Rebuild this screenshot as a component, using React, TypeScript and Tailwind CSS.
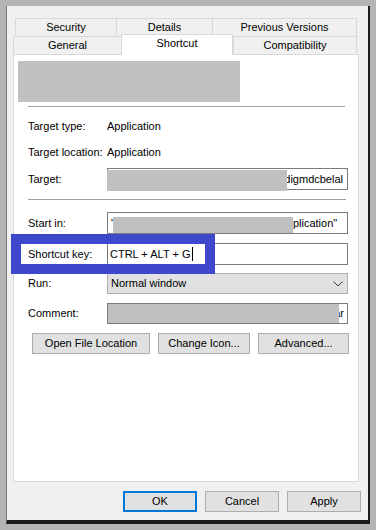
import React from "react";

const font = "font-['Segoe_UI','Liberation_Sans',Arial,sans-serif] text-[11px] text-black";

function Tab({ label, w, active = false }: { label: string; w: string; active?: boolean }) {
  return (
    <div
      className={`${w} flex items-center justify-center border-l border-t border-[#d9d9d9] ${
        active ? "relative z-10 -mb-px h-[21px] border-r bg-white pb-[3px]" : "h-[18px] bg-[#f0f0f0]"
      }`}
    >
      {label}
    </div>
  );
}

function Label({ children }: { children: React.ReactNode }) {
  return <div className="w-[79px] shrink-0">{children}</div>;
}

function Btn({ label, w, primary = false }: { label: string; w: string; primary?: boolean }) {
  return (
    <div
      className={`${w} flex h-[21px] items-center justify-center bg-[#e1e1e1] ${
        primary ? "border-2 border-[#0078d7]" : "border border-[#adadad]"
      }`}
    >
      {label}
    </div>
  );
}

export default function App() {
  return (
    <div className={`h-[530px] w-[376px] bg-[#b4b4b4] pl-[6px] pt-[6px] ${font}`}>
      <div className="h-[518px] w-[364px] border-b-4 border-l border-r-2 border-[#1e1a17] border-l-[#7a7a7a] bg-[#f0f0f0] pt-[12px]">
        {/* tabs */}
        <div className="ml-[8px] flex h-[18px] w-[342px]">
          <Tab label="Security" w="w-[101px]" />
          <Tab label="Details" w="w-[96px]" />
          <div className="flex h-[18px] w-[145px] items-center justify-center border-l border-r border-t border-[#d9d9d9]">
            Previous Versions
          </div>
        </div>
        <div className="ml-[6px] flex h-[18px] w-[344px] items-end">
          <Tab label="General" w="w-[108px]" />
          <Tab label="Shortcut" w="w-[112px]" active />
          <div className="flex h-[18px] w-[124px] items-center justify-center border-l border-r border-t border-[#d9d9d9]">
            Compatibility
          </div>
        </div>

        {/* panel */}
        <div className="ml-[6px] h-[428px] w-[346px] border border-[#d9d9d9] bg-white">
          <div className="ml-[4px] mt-[6px] h-[41px] w-[222px] bg-[#c0c0c0]" />
          <div className="ml-[14px] mt-[4px] h-px w-[317px] bg-[#a0a0a0]" />

          <div className="ml-[14px] mt-[8px] flex h-[22px] items-center">
            <Label>Target type:</Label>
            <span>Application</span>
          </div>
          <div className="ml-[14px] mt-[4px] flex h-[22px] items-center">
            <Label>Target location:</Label>
            <span>Application</span>
          </div>
          <div className="ml-[14px] mt-[5px] flex h-[22px] items-center">
            <Label>Target:</Label>
            <div className="relative flex h-[22px] w-[241px] items-center justify-end border border-[#7a7a7a] pr-[4px]">
              <span>:digmdcbelal</span>
              <div className="absolute -left-px top-[1px] h-[21px] w-[180px] bg-[#c0c0c0]" />
            </div>
          </div>

          <div className="ml-[14px] mt-[9px] h-px w-[318px] bg-[#a0a0a0]" />

          <div className="ml-[14px] mt-[12px] flex h-[22px] items-center">
            <Label>Start in:</Label>
            <div className="flex h-[22px] w-[241px] items-center border border-[#7a7a7a] pl-[3px]">
              <span>"</span>
              <div className="-ml-[2px] h-[16px] w-[180px] self-end bg-[#c0c0c0]" />
              <span>plication"</span>
            </div>
          </div>

          <div className="relative ml-[14px] mt-[9px] flex h-[22px] items-center">
            <Label>Shortcut key:</Label>
            <div className="flex h-[22px] w-[241px] items-center border border-[#7a7a7a] pl-[2px]">
              <span>CTRL + ALT + G</span>
              <span className="ml-px inline-block h-[14px] w-px bg-black" />
            </div>
            <div className="absolute -left-[17px] -top-[9px] z-20 h-[40px] w-[204px] border-[10px] border-[#3f48cc]" />
          </div>

          <div className="ml-[14px] mt-[8px] flex h-[21px] items-center">
            <Label>Run:</Label>
            <div className="flex h-[21px] w-[241px] items-center justify-between border border-[#adadad] bg-[#e1e1e1] pl-[3px] pr-[4px]">
              <span>Normal window</span>
              <svg width="10" height="6" viewBox="0 0 10 6">
                <polyline points="0.5,0.5 5,5 9.5,0.5" fill="none" stroke="#404040" strokeWidth="1" />
              </svg>
            </div>
          </div>

          <div className="ml-[14px] mt-[9px] flex h-[21px] items-center">
            <Label>Comment:</Label>
            <div className="relative flex h-[21px] w-[241px] items-center justify-end border border-[#7a7a7a] pr-[3px]">
              <span>ar</span>
              <div className="absolute left-0 top-0 h-full w-[231px] bg-[#c0c0c0]" />
            </div>
          </div>

          <div className="ml-[18px] mt-[9px] flex gap-[8px]">
            <Btn label="Open File Location" w="w-[118px]" />
            <Btn label="Change Icon..." w="w-[92px]" />
            <Btn label="Advanced..." w="w-[91px]" />
          </div>
        </div>

        {/* dialog buttons */}
        <div className="mt-[9px] flex justify-end gap-[8px] pr-[7px]">
          <Btn label="OK" w="w-[74px]" primary />
          <Btn label="Cancel" w="w-[74px]" />
          <Btn label="Apply" w="w-[74px]" />
        </div>
      </div>
    </div>
  );
}
